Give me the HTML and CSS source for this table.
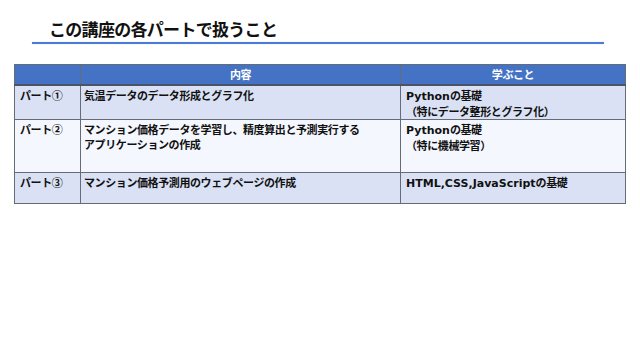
FILE: index.html
```html
<!DOCTYPE html>
<html lang="ja">
<head>
<meta charset="utf-8">
<link rel="stylesheet" href="styles.css">
</head>
<body>
<div class="slide">
  <header class="title-wrap">
    <h1 class="title">この講座の各パートで扱うこと</h1>
    <div class="rule"></div>
  </header>
  <table class="grid">
    <colgroup>
      <col class="c1"><col class="c2"><col class="c3">
    </colgroup>
    <thead>
      <tr class="head">
        <th></th>
        <th>内容</th>
        <th>学ぶこと</th>
      </tr>
    </thead>
    <tbody>
      <tr class="r1 band">
        <td class="part">パート①</td>
        <td class="desc">気温データのデータ形成とグラフ化</td>
        <td class="learn"><span class="lat">Python</span>の基礎<br>（特にデータ整形とグラフ化）</td>
      </tr>
      <tr class="r2">
        <td class="part">パート②</td>
        <td class="desc">マンション価格データを学習し、精度算出と予測実行する<br>アプリケーションの作成</td>
        <td class="learn"><span class="lat">Python</span>の基礎<br>（特に機械学習）</td>
      </tr>
      <tr class="r3 band">
        <td class="part">パート③</td>
        <td class="desc">マンション価格予測用のウェブページの作成</td>
        <td class="learn"><span class="lat">HTML,CSS,JavaScript</span>の基礎</td>
      </tr>
    </tbody>
  </table>
</div>
</body>
</html>
```
FILE: styles.css
```css
html, body {
  margin: 0;
  padding: 0;
  background: #ffffff;
}
.slide {
  width: 640px;
  height: 360px;
  overflow: hidden;
  font-family: "Noto Sans CJK JP", sans-serif;
}
.title-wrap {
  padding-top: 18px;
}
.title {
  margin: 0 0 0 49px;
  font-size: 17px;
  line-height: 22px;
  font-weight: 700;
  letter-spacing: -0.7px;
  color: #111111;
}
.rule {
  margin: 2px 0 0 32px;
  width: 572px;
  height: 2px;
  background: #4a7bd6;
  box-shadow: 0 0 1px #8fb0ea;
}
.grid {
  margin: 20px 0 0 14px;
  width: 611px;
  border-collapse: collapse;
  table-layout: fixed;
  font-size: 11px;
  font-weight: 700;
  letter-spacing: -0.4px;
  color: #111111;
}
.c1 { width: 66px; }
.c2 { width: 320px; }
.c3 { width: 225px; }
.grid th, .grid td {
  border: 1px solid #666b78;
  padding: 2px 5px 0;
  text-align: left;
  vertical-align: top;
  line-height: 15px;
}
.grid td.desc {
  padding-left: 3px;
}
.lat {
  font-family: "DejaVu Sans", "Noto Sans CJK JP", sans-serif;
  letter-spacing: 0;
}
.head th {
  height: 14px;
  padding: 2px 5px 2px;
  background: #4472c4;
  color: #ffffff;
  text-align: center;
  vertical-align: middle;
  border-bottom: 2px solid #4b5467;
}
.band td {
  background: #dae1f4;
}
.r2 td {
  background: #f4f7fe;
}
.r1 td { height: 30px; }
.r2 td { height: 50px; }
.r3 td { height: 28px; }
```
